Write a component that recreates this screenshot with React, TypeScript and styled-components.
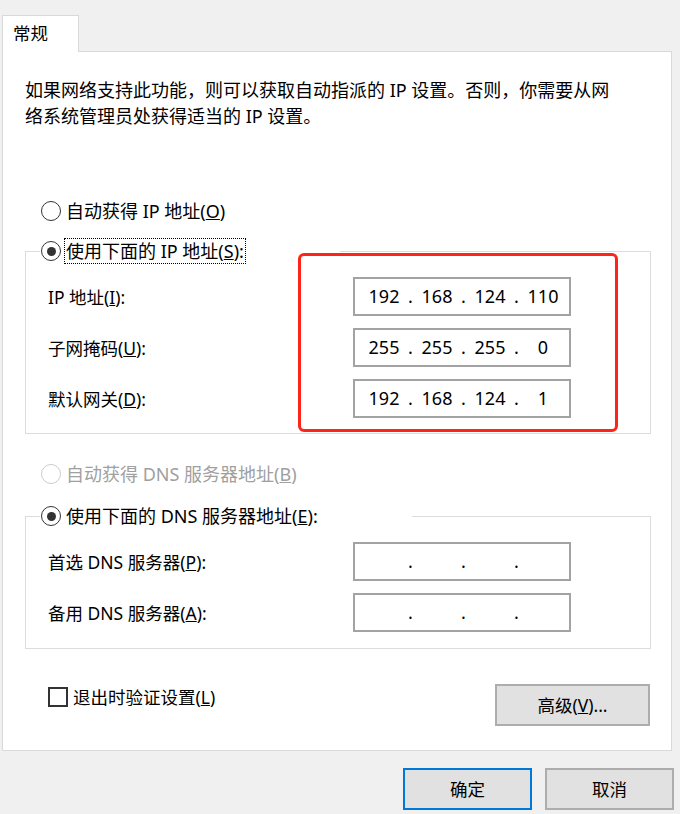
import React from "react";
import styled, { createGlobalStyle } from "styled-components";

const GlobalStyle = createGlobalStyle`
  html, body {
    margin: 0;
    padding: 0;
    background: #f0f0f0;
  }
  body {
    font-family: "Noto Sans", "Noto Sans CJK SC", sans-serif;
    font-size: 17.5px;
    color: #000;
  }
  * {
    box-sizing: border-box;
  }
`;

const Window = styled.div`
  width: 680px;
  height: 814px;
  background: #f0f0f0;
  display: flex;
  flex-direction: column;
`;

const TabBar = styled.div`
  display: flex;
  padding: 15px 0 0 2px;
`;

const Tab = styled.div`
  width: 77px;
  height: 37px;
  margin-bottom: -1px;
  padding-left: 10px;
  background: #fff;
  border: 1px solid #d9d9d9;
  border-bottom: none;
  line-height: 35px;
  z-index: 1;
`;

const Panel = styled.div`
  width: 670px;
  height: 700px;
  margin-left: 2px;
  padding: 25px 20px 0 22px;
  background: #fff;
  border: 1px solid #d9d9d9;
  display: flex;
  flex-direction: column;
`;

const Description = styled.p`
  margin: 0;
  font-size: 18px;
  line-height: 26px;
`;

const RadioRow = styled.label<{ $disabled?: boolean }>`
  display: flex;
  align-items: center;
  gap: 5px;
  height: 26px;
  font-size: 18px;
  line-height: 26px;
  color: ${(p) => (p.$disabled ? "#a0a0a0" : "#000")};
  white-space: nowrap;
`;

const TopRadio = styled(RadioRow)<{ $top: number }>`
  margin-top: ${(p) => p.$top}px;
  padding-left: 16px;
`;

const RadioDot = styled.span<{ $checked?: boolean; $disabled?: boolean }>`
  flex: none;
  position: relative;
  width: 20px;
  height: 20px;
  border-radius: 50%;
  border: 1.5px solid ${(p) => (p.$disabled ? "#cccccc" : "#333")};
  background: #fff;

  &::after {
    content: "";
    display: ${(p) => (p.$checked ? "block" : "none")};
    position: absolute;
    left: 50%;
    top: 50%;
    width: 9px;
    height: 9px;
    margin: -4.5px 0 0 -4.5px;
    border-radius: 50%;
    background: #333;
  }
`;

const FocusText = styled.span`
  outline: 1px dotted #000;
  outline-offset: -1px;
  padding: 0 2px;
  margin-left: -2px;
  line-height: 26px;
`;

const Group = styled.fieldset<{ $top: number }>`
  position: relative;
  margin: ${(p) => p.$top}px 0 0;
  padding: 0;
  min-width: 0;
  border: 1px solid #dcdcdc;
`;

const GroupLegend = styled.legend<{ $width: number }>`
  width: ${(p) => p.$width}px;
  margin-left: 14px;
  padding: 0 0 0 1px;
`;

const FieldGrid = styled.div<{ $bottom: number }>`
  position: relative;
  display: grid;
  grid-template-columns: 305px 218px;
  grid-auto-rows: 39px;
  row-gap: 12px;
  align-items: center;
  padding: 13px 0 ${(p) => p.$bottom}px 22px;
`;

const FieldLabel = styled.span`
  line-height: 26px;
  white-space: nowrap;
`;

const IpBox = styled.div`
  height: 39px;
  border: 2px solid #a3a3a3;
  background: #fff;
  display: grid;
  grid-template-columns: 42px 11px 42px 11px 42px 11px 42px;
  padding-left: 8px;
  font-size: 18px;
  line-height: 35px;
  text-align: center;
`;

const Highlight = styled.div`
  position: absolute;
  left: 272px;
  top: -11px;
  width: 320px;
  height: 179px;
  border: 3px solid #ff2418;
  border-radius: 6px;
  pointer-events: none;
`;

const BottomRow = styled.div`
  display: flex;
  justify-content: space-between;
  align-items: flex-start;
  margin-top: 35px;
`;

const CheckRow = styled.label`
  display: flex;
  align-items: center;
  gap: 5px;
  margin: 0 0 0 23px;
  height: 26px;
  line-height: 26px;
`;

const CheckBox = styled.span`
  width: 20px;
  height: 20px;
  border: 2px solid #333;
  background: #fff;
`;

const Button = styled.button<{ $primary?: boolean; $width: number }>`
  width: ${(p) => p.$width}px;
  height: 42px;
  padding: 0;
  background: #e1e1e1;
  border: ${(p) => (p.$primary ? "2px solid #0078d7" : "2px solid #adadad")};
  font-family: "Noto Sans", "Noto Sans CJK SC", sans-serif;
  font-size: 17.5px;
  color: #000;
  line-height: 38px;
`;

const AdvancedButton = styled(Button)`
  margin-right: 1px;
`;

const Footer = styled.div`
  display: flex;
  justify-content: flex-end;
  gap: 13px;
  margin-top: 17px;
  padding-right: 6px;
`;

const Ip = ({ parts }: { parts: string[] }) => (
  <IpBox>
    <span>{parts[0]}</span>
    <span>.</span>
    <span>{parts[1]}</span>
    <span>.</span>
    <span>{parts[2]}</span>
    <span>.</span>
    <span>{parts[3]}</span>
  </IpBox>
);

const empty = ["", "", "", ""];

export default function App() {
  return (
    <Window>
      <GlobalStyle />
      <TabBar>
        <Tab>常规</Tab>
      </TabBar>
      <Panel>
        <Description>
          如果网络支持此功能，则可以获取自动指派的 IP 设置。否则，你需要从网
          <br />
          络系统管理员处获得适当的 IP 设置。
        </Description>

        <TopRadio $top={69}>
          <RadioDot />
          <span>
            自动获得 IP 地址(<u>O</u>)
          </span>
        </TopRadio>

        <Group $top={14}>
          <GroupLegend $width={300}>
            <RadioRow>
              <RadioDot $checked />
              <FocusText>
                使用下面的 IP 地址(<u>S</u>):
              </FocusText>
            </RadioRow>
          </GroupLegend>
          <FieldGrid $bottom={15}>
            <FieldLabel>
              IP 地址(<u>I</u>):
            </FieldLabel>
            <Ip parts={["192", "168", "124", "110"]} />
            <FieldLabel>
              子网掩码(<u>U</u>):
            </FieldLabel>
            <Ip parts={["255", "255", "255", "0"]} />
            <FieldLabel>
              默认网关(<u>D</u>):
            </FieldLabel>
            <Ip parts={["192", "168", "124", "1"]} />
            <Highlight />
          </FieldGrid>
        </Group>

        <TopRadio $top={27} $disabled>
          <RadioDot $disabled />
          <span>
            自动获得 DNS 服务器地址(<u>B</u>)
          </span>
        </TopRadio>

        <Group $top={16}>
          <GroupLegend $width={372}>
            <RadioRow>
              <RadioDot $checked />
              <span>
                使用下面的 DNS 服务器地址(<u>E</u>):
              </span>
            </RadioRow>
          </GroupLegend>
          <FieldGrid $bottom={16}>
            <FieldLabel>
              首选 DNS 服务器(<u>P</u>):
            </FieldLabel>
            <Ip parts={empty} />
            <FieldLabel>
              备用 DNS 服务器(<u>A</u>):
            </FieldLabel>
            <Ip parts={empty} />
          </FieldGrid>
        </Group>

        <BottomRow>
          <CheckRow>
            <CheckBox />
            <span>
              退出时验证设置(<u>L</u>)
            </span>
          </CheckRow>
          <AdvancedButton $width={155}>
            高级(<u>V</u>)...
          </AdvancedButton>
        </BottomRow>
      </Panel>
      <Footer>
        <Button $primary $width={129}>
          确定
        </Button>
        <Button $width={129}>取消</Button>
      </Footer>
    </Window>
  );
}
